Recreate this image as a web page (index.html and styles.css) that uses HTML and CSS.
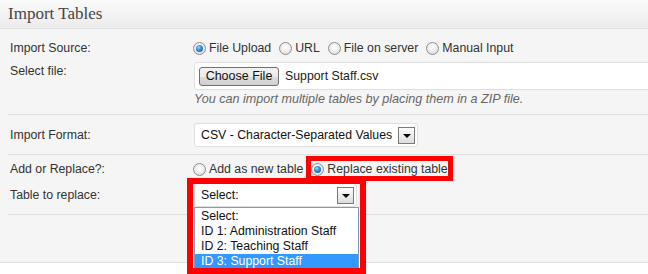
FILE: index.html
```html
<!doctype html>
<html>
<head>
<meta charset="utf-8">
<title>Import Tables</title>
<link rel="stylesheet" href="styles.css">
</head>
<body>
<div class="postbox">
	<h3 class="hndle">Import Tables</h3>

	<div class="group g-source">
		<div class="row row-22">
			<div class="label">Import Source:</div>
			<div class="field radios">
				<label class="radio"><span class="dot on"></span>File Upload</label>
				<label class="radio"><span class="dot"></span>URL</label>
				<label class="radio"><span class="dot"></span>File on server</label>
				<label class="radio"><span class="dot"></span>Manual Input</label>
			</div>
		</div>
		<div class="row row-file">
			<div class="label">Select file:</div>
			<div class="field">
				<div class="filebox"><span class="btn">Choose File</span><span class="fname">Support Staff.csv</span></div>
				<div class="desc">You can import multiple tables by placing them in a ZIP file.</div>
			</div>
		</div>
	</div>

	<div class="group g-format">
		<div class="row row-sel">
			<div class="label">Import Format:</div>
			<div class="field">
				<div class="select sel-format">CSV - Character-Separated Values<span class="arrow"></span></div>
			</div>
		</div>
	</div>

	<div class="group g-replace">
		<div class="row row-22">
			<div class="label">Add or Replace?:</div>
			<div class="field radios">
				<label class="radio"><span class="dot"></span>Add as new table</label>
				<label class="radio"><span class="dot on"></span>Replace existing table</label>
			</div>
		</div>
		<div class="row row-sel row-table">
			<div class="label">Table to replace:</div>
			<div class="field">
				<div class="select sel-table">Select:<span class="arrow"></span>
					<ul class="options">
						<li>Select:</li>
						<li>ID 1: Administration Staff</li>
						<li>ID 2: Teaching Staff</li>
						<li class="hl">ID 3: Support Staff</li>
					</ul>
				</div>
			</div>
		</div>
	</div>

	<div class="group g-empty"></div>

	<div class="mark mark-radio"></div>
	<div class="mark mark-select"></div>
</div>
</body>
</html>
```

FILE: styles.css
```css
*{ margin:0; padding:0; box-sizing:border-box; list-style:none;}
html,body{ height:100%; overflow:hidden;}
body{ background:#fff; font-family:"Liberation Sans", Arial, sans-serif; font-size:12.3px; color:#333;}

.postbox{ position:relative; background:#f5f5f5; border-bottom:1px solid #dfdfdf;}
.hndle{ height:29px; padding-left:8px; line-height:28px; font-family:"Liberation Serif", Georgia, serif; font-weight:normal; font-size:17px; color:#464646; background:linear-gradient(#fafafa,#ececec); border-bottom:1px solid #dfdfdf;}

.group{ margin-left:8px; padding-left:2px; border-bottom:1px solid #dfdfdf;}
.g-source{ padding-top:8px; padding-bottom:6px;}
.g-format{ padding-top:8px; padding-bottom:7px;}
.g-replace{ padding-top:3px; padding-bottom:7px;}
.g-empty{ height:47px; border-bottom:0;}

.row{ display:grid; grid-template-columns:183px 1fr;}
.row-22{ height:22px; line-height:22px;}
.row-file{ margin-top:3px;}
.row-file .label{ line-height:18px;}
.row-sel .label{ line-height:24px;}
.row-table{ margin-top:3px;}

.radios{ display:flex; align-items:center; gap:8px;}
.radio{ display:flex; align-items:center; gap:3px; color:#333;}
.dot{ width:13px; height:13px; border-radius:50%; border:1px solid #8f8f8f; background:radial-gradient(circle at 50% 40%,#fff 0,#f0f0f0 45%,#cfcfcf 100%); display:flex; align-items:center; justify-content:center;}
.dot.on::after{ content:""; width:7px; height:7px; border-radius:50%; background:radial-gradient(circle at 40% 35%,#9fd6ff 0,#3a8fd8 40%,#0b4f9a 100%);}

.filebox{ margin-left:1px; width:calc(100% + 20px); height:28px; padding:4px 4px 0; background:#fff; border:1px solid #dfdfdf; border-radius:3px; display:flex; align-items:flex-start;}
.btn{ width:80px; height:19px; line-height:17px; text-align:center; font-size:12.5px; color:#111; border:1px solid #707070; border-radius:3px; background:linear-gradient(#f2f2f2 0,#ebebeb 50%,#dddddd 51%,#cfcfcf 100%);}
.fname{ margin-left:6px; line-height:19px; color:#222;}
.desc{ margin-left:1px; line-height:18px; font-size:12.6px; font-style:italic; color:#666;}

.select{ position:relative; margin-left:1px; height:24px; line-height:22px; padding-left:6px; background:#fff; border:1px solid #dfdfdf; border-radius:3px; color:#111;}
.sel-format{ width:224px;}
.sel-table{ width:163px;}
.arrow{ position:absolute; right:2px; top:3px; width:17px; height:17px; border:1px solid #7a7a7a; background:linear-gradient(#fdfdfd,#dcdcdc);}
.arrow::after{ content:""; position:absolute; left:4px; top:6px; border-left:4px solid transparent; border-right:4px solid transparent; border-top:4px solid #000;}

.options{ position:absolute; left:-1px; top:23px; width:165px; padding-top:1px; background:#fff; border:1px solid #7f9db9; line-height:15px; z-index:2;}
.options li{ padding-left:6px; height:15px; color:#111;}
.options li.hl{ background:#3399ff; color:#fff;}

.mark{ position:absolute; border:5px solid #f00; z-index:3;}
.mark-radio{ left:306px; top:156px; width:147px; height:25px;}
.mark-select{ left:187px; top:178px; width:179px; height:96px; border-width:6px;}
```
